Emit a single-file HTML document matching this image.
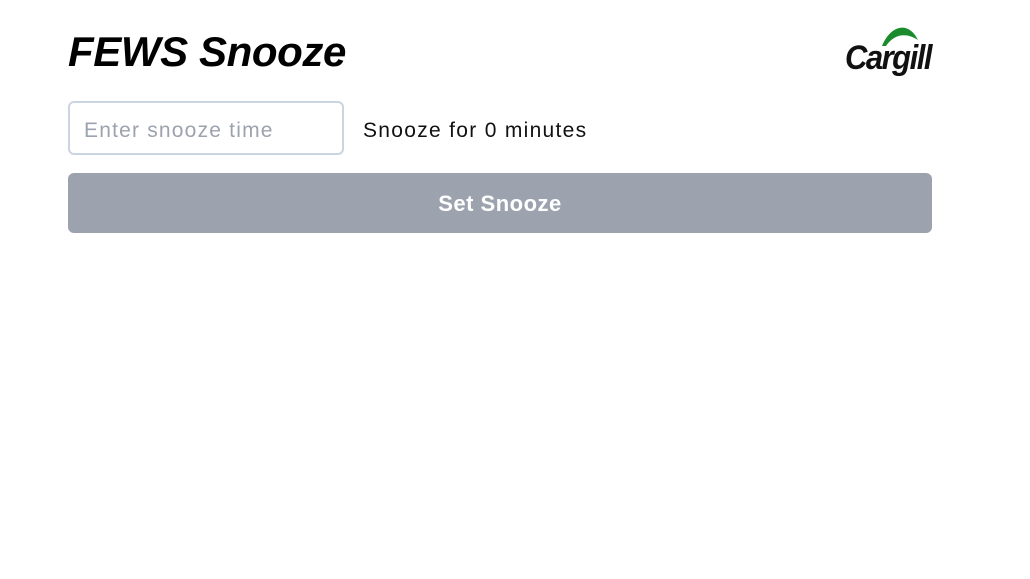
<!DOCTYPE html>
<html><head><style>
body{margin:0;background:#fff;width:1030px;height:579px;position:relative;font-family:"Liberation Sans",sans-serif;}
h1{position:absolute;left:68px;top:26px;margin:0;font-size:42px;font-weight:bold;font-style:italic;line-height:52px;letter-spacing:-0.4px;color:#000;}
.inp{position:absolute;left:68px;top:101px;border:2px solid #cbd5e1;border-radius:6px;box-sizing:border-box;width:276px;height:54px;}
.inp span{position:absolute;left:14px;top:16px;font-size:21px;letter-spacing:1.2px;color:#9ca3af;}
.lbl{position:absolute;left:363px;top:119px;font-size:21px;letter-spacing:1.3px;color:#111;}
.btn{position:absolute;left:68px;top:173px;width:864px;height:60px;background:#9ca3af;border-radius:6px;color:#fff;font-weight:bold;font-size:22px;letter-spacing:0.5px;text-align:center;line-height:62px;}
.logo{position:absolute;left:844px;top:22px;}
</style></head><body>
<h1>FEWS Snooze</h1>
<div class="logo"><svg width="92" height="56" viewBox="0 0 92 56"><path d="M38 24 C46 4 64 -2 74 18 C62 10 50 12 42 24 Z" fill="#1a8c2e"/><text x="1" y="47" font-family="Liberation Sans" font-weight="bold" font-style="italic" font-size="31" fill="#111" letter-spacing="-1.5" transform="scale(1,1.1)" transform-origin="0 47">Cargill</text></svg></div>
<div class="inp"><span>Enter snooze time</span></div>
<div class="lbl">Snooze for 0 minutes</div>
<div class="btn">Set Snooze</div>
</body></html>
